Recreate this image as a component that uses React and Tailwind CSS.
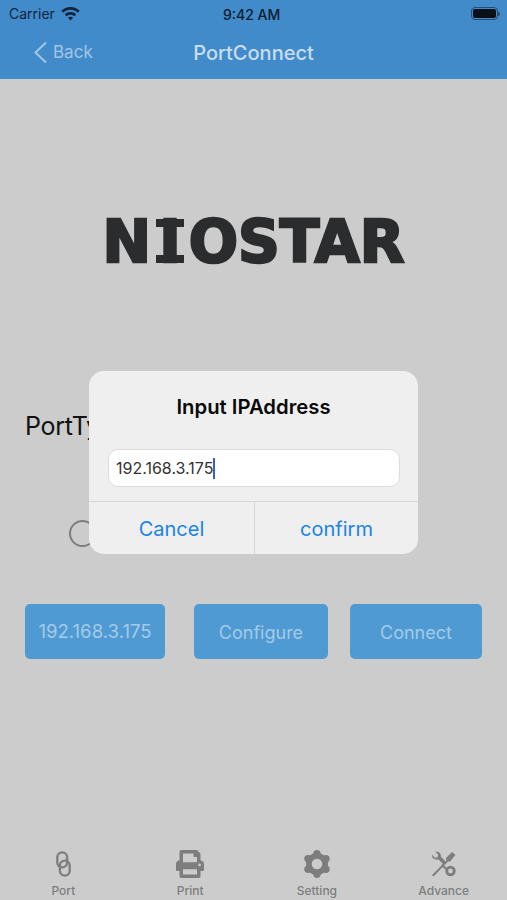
import { FaPrint } from 'react-icons/fa'

const sans = { fontFamily: 'Inter, "Liberation Sans", sans-serif' }
const logoSans = { fontFamily: '"DejaVu Sans", sans-serif' }

function WifiIcon() {
  return (
    <svg width="19" height="14" viewBox="0 0 19 14" fill="#10233a">
      <path d="M9.5 0C5.9 0 2.7 1.4.3 3.7l1.8 2C4 3.9 6.6 2.800 9.500 2.800s5.500 1.100 7.400 2.900l1.800-2C16.300 1.400 13.100 0 9.500 0z" />
      <path d="M9.500 5C7.300 5 5.300 5.900 3.800 7.300l1.800 2c1-1 2.400-1.600 3.900-1.600s2.900.6 3.900 1.600l1.800-2C13.700 5.900 11.700 5 9.500 5z" />
      <path d="M9.500 9.700c-1 0-1.900.4-2.500 1l2.500 2.800 2.500-2.800c-.6-.6-1.500-1-2.500-1z" />
    </svg>
  )
}

function BatteryIcon() {
  return (
    <div className="flex items-center">
      <div className="flex h-[13px] w-[27px] items-center justify-center rounded-[4px] border border-[#2a4a6e]">
        <div className="h-[9px] w-[23px] rounded-[2px] bg-[#0b0f16]" />
      </div>
      <div className="h-1 w-[2px] rounded-r-sm bg-[#2a4a6e]" />
    </div>
  )
}

function LinkIcon() {
  return (
    <svg width="15" height="26" viewBox="0 0 15 26" fill="none" stroke="#7d7d7d" strokeWidth="2.300">
      <rect x="1.300" y="1.300" width="9.800" height="15" rx="4.900" />
      <rect x="3.900" y="9.700" width="9.800" height="15" rx="4.900" />
    </svg>
  )
}

function GearIcon() {
  return (
    <svg width="28" height="28" viewBox="0 0 28 28">
      <g fill="#7d7d7d">
        <circle cx="14" cy="14" r="11" />
        <circle cx="14" cy="3.700" r="3.700" />
        <circle cx="14" cy="24.300" r="3.700" />
        <circle cx="5" cy="8.800" r="3.700" />
        <circle cx="23" cy="8.800" r="3.700" />
        <circle cx="5" cy="19.200" r="3.700" />
        <circle cx="23" cy="19.200" r="3.700" />
      </g>
      <circle cx="14" cy="14" r="5.300" fill="#cccccc" />
    </svg>
  )
}

function ToolsIcon() {
  return (
    <svg width="25" height="26" viewBox="0 0 25 26" fill="#7d7d7d">
      <path d="M1 24 15.500 9.500l-.5-2.500 6-6 3.500 3-5.500 6.500-2-.1L2.500 25.500z" />
      <path d="M1 3.800 4 6.800l2.600-.6.600-2.700L4.200.6c3.200-.9 6.200 1.700 5.600 5L15 11l-2.400 2.400-5.100-5C4 9.300.3 7 1 3.800z" />
      <circle cx="19.500" cy="20" r="3.800" fill="none" stroke="#7d7d7d" strokeWidth="2.800" />
      <path d="M11.500 13 16 17l-1 2-5-4.500z" />
    </svg>
  )
}

const tabs = [
  { label: 'Port', icon: <LinkIcon /> },
  { label: 'Print', icon: <FaPrint size={28} color="#7d7d7d" /> },
  { label: 'Setting', icon: <GearIcon /> },
  { label: 'Advance', icon: <ToolsIcon /> },
]

export default function App() {
  return (
    <div className="relative flex h-[900px] w-[507px] flex-col overflow-hidden bg-[#cccccc]" style={sans}>
      <header className="h-[79px] shrink-0 bg-[#418bcb]">
        <div className="relative flex h-[27px] items-center justify-between pl-[9px] pr-[7px]">
          <div className="flex items-center gap-[6px] text-[14px] text-[#10233a]">
            <span>Carrier</span>
            <WifiIcon />
          </div>
          <span className="absolute left-[223px] top-[4px] text-[14px] font-medium text-[#0b1a2c]">9:42 AM</span>
          <BatteryIcon />
        </div>
        <div className="relative flex h-[52px] items-center justify-center">
          <div className="absolute left-[33px] top-[13px] flex items-center gap-[5px] text-[#a3c5e4]">
            <svg width="15" height="23" viewBox="0 0 15 23" fill="none" stroke="#a3c5e4" strokeWidth="2">
              <path d="M13 1.500 2.500 11.500 13 21.500" />
            </svg>
            <span className="text-[17px]">Back</span>
          </div>
          <h1 className="text-[20px] font-medium text-[#c9ddef]">PortConnect</h1>
        </div>
      </header>

      <main className="flex flex-1 flex-col">
        <div className="mt-[138px] flex h-[50px] items-center justify-center">
          <span className="text-[58px] font-bold leading-none text-[#2b2c2d] [-webkit-text-stroke:2.5px_#2b2c2d]" style={logoSans}>
            N
            <span className="relative mx-[8px] inline-block before:absolute before:left-[-3px] before:right-[-3px] before:top-[6px] before:h-[8px] before:bg-[#2b2c2d] after:absolute after:bottom-[8px] after:left-[-3px] after:right-[-3px] after:h-[8px] after:bg-[#2b2c2d]">
              I
            </span>
            OSTAR
          </span>
        </div>

        <p className="ml-[25px] mt-[144px] text-[25px] leading-[30px] tracking-[-0.3px] text-[#111111]">PortType</p>

        <div className="ml-[69px] mt-[79px] h-[27px] w-[27px] rounded-full border-2 border-[#7d7d7d]" />

        <div className="ml-[25px] mt-[57px] flex h-[55px] items-stretch text-[18px] text-[#a3cbe7]">
          <div className="flex w-[140px] items-center justify-center rounded-[5px] bg-[#4f9ad3] pt-[1px] text-[18.600px]">192.168.3.175</div>
          <div className="ml-[29px] flex w-[134px] items-center justify-center rounded-[5px] bg-[#4f9ad3] pt-[1px]">Configure</div>
          <div className="ml-[22px] flex w-[132px] items-center justify-center rounded-[5px] bg-[#4f9ad3] pt-[1px]">Connect</div>
        </div>

        <nav className="mt-auto grid h-[53px] grid-cols-4 text-[#7d7d7d]">
          {tabs.map((tab) => (
            <div key={tab.label} className="flex flex-col items-center">
              <div className="flex h-[34px] items-center">{tab.icon}</div>
              <span className="mt-[2px] text-[12px] font-medium leading-[16px]">{tab.label}</span>
            </div>
          ))}
        </nav>
      </main>

      <div className="absolute left-[89px] top-[371px] flex h-[183px] w-[329px] flex-col rounded-[15px] bg-[#efefef]">
        <h2 className="mt-[24px] text-center text-[20.300px] font-semibold leading-[24px] text-[#0a0a0a]">Input IPAddress</h2>
        <div className="ml-[19px] mr-[18px] mt-[30px] flex h-[38px] items-center rounded-[10px] border border-[#dcdcdc] bg-white pl-[7px] text-[16px] text-[#333333]">
          <span>192.168.3.175</span>
          <span className="h-[21px] w-[2px] bg-[#3f5fc4]" />
        </div>
        <div className="mt-[14px] grid flex-1 grid-cols-[166px_1fr] border-t border-[#d8d8d8] text-[20px] text-[#1a84e6]">
          <div className="flex items-center justify-center border-r border-[#d8d8d8] pt-[1px]">Cancel</div>
          <div className="flex items-center justify-center pt-[1px]">confirm</div>
        </div>
      </div>
    </div>
  )
}
